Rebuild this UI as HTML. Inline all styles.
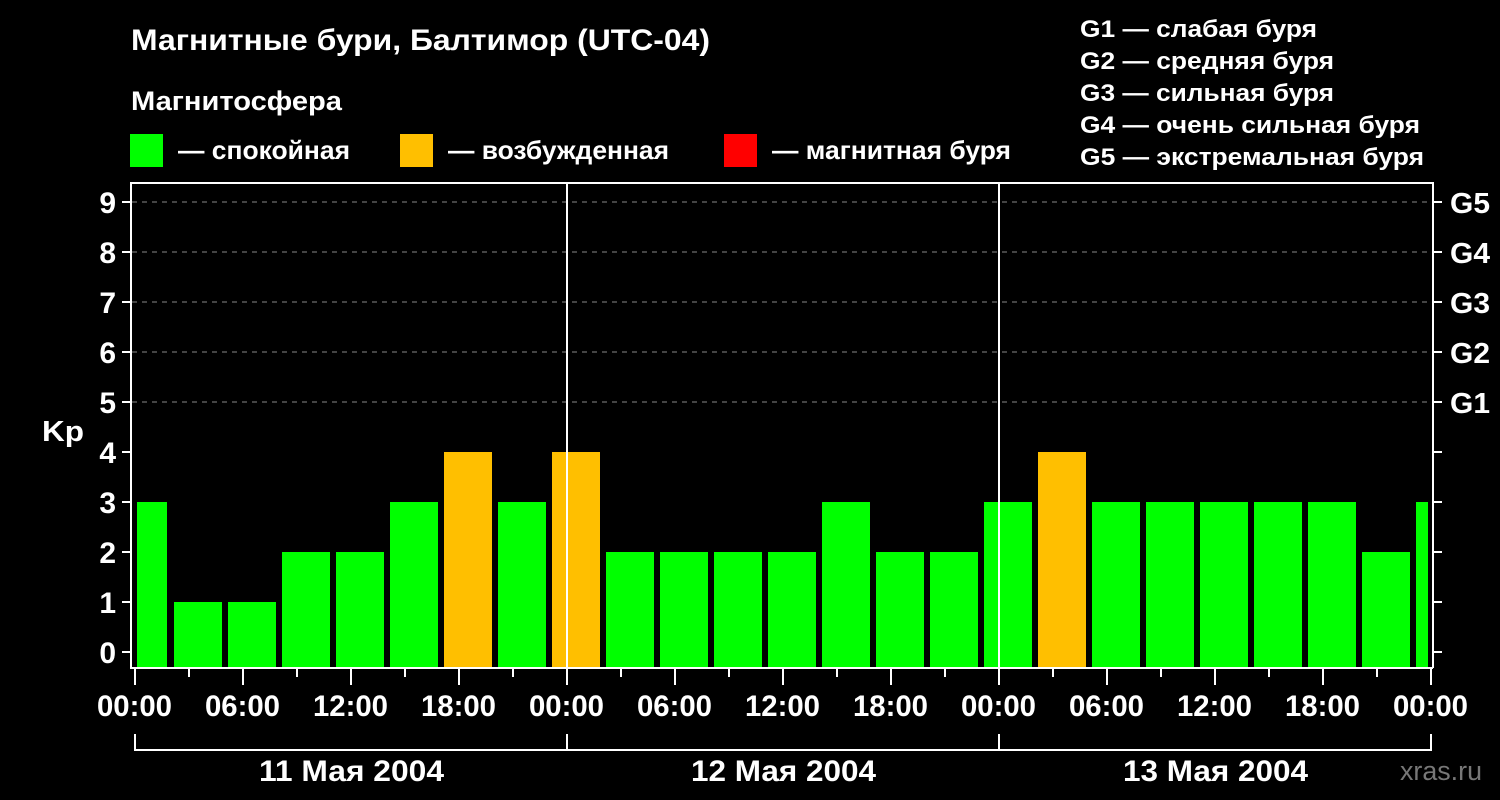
<!DOCTYPE html>
<html><head><meta charset="utf-8"><style>html,body{margin:0;padding:0;background:#000;width:1500px;height:800px;overflow:hidden}</style></head><body>
<svg width="1500" height="800" xmlns="http://www.w3.org/2000/svg" font-family="Liberation Sans, Arial, sans-serif" font-weight="bold" fill="#fff">
<rect width="1500" height="800" fill="#000"/>
<text x="131" y="50" font-size="30" textLength="579" lengthAdjust="spacingAndGlyphs">Магнитные бури, Балтимор (UTC-04)</text>
<text x="131" y="110" font-size="27" textLength="211" lengthAdjust="spacingAndGlyphs">Магнитосфера</text>
<rect x="130" y="134" width="33" height="33" fill="#00ff00"/>
<text x="178" y="159" font-size="26" textLength="172" lengthAdjust="spacingAndGlyphs">— спокойная</text>
<rect x="400" y="134" width="33" height="33" fill="#ffbf00"/>
<text x="448" y="159" font-size="26" textLength="221" lengthAdjust="spacingAndGlyphs">— возбужденная</text>
<rect x="724" y="134" width="33" height="33" fill="#ff0000"/>
<text x="772" y="159" font-size="26" textLength="239" lengthAdjust="spacingAndGlyphs">— магнитная буря</text>
<g font-size="24">
<text x="1080" y="37" textLength="237" lengthAdjust="spacingAndGlyphs">G1 — слабая буря</text>
<text x="1080" y="69" textLength="254" lengthAdjust="spacingAndGlyphs">G2 — средняя буря</text>
<text x="1080" y="101" textLength="254" lengthAdjust="spacingAndGlyphs">G3 — сильная буря</text>
<text x="1080" y="133" textLength="340" lengthAdjust="spacingAndGlyphs">G4 — очень сильная буря</text>
<text x="1080" y="165" textLength="344" lengthAdjust="spacingAndGlyphs">G5 — экстремальная буря</text>
</g>
<g stroke="#888" stroke-width="1" stroke-dasharray="5,5">
<line x1="132" y1="202" x2="1432" y2="202"/><line x1="132" y1="252" x2="1432" y2="252"/><line x1="132" y1="302" x2="1432" y2="302"/><line x1="132" y1="352" x2="1432" y2="352"/><line x1="132" y1="402" x2="1432" y2="402"/>
</g>
<g>
<rect x="137" y="502" width="30" height="166" fill="#00ff00"/>
<rect x="174" y="602" width="48" height="66" fill="#00ff00"/>
<rect x="228" y="602" width="48" height="66" fill="#00ff00"/>
<rect x="282" y="552" width="48" height="116" fill="#00ff00"/>
<rect x="336" y="552" width="48" height="116" fill="#00ff00"/>
<rect x="390" y="502" width="48" height="166" fill="#00ff00"/>
<rect x="444" y="452" width="48" height="216" fill="#ffbf00"/>
<rect x="498" y="502" width="48" height="166" fill="#00ff00"/>
<rect x="552" y="452" width="48" height="216" fill="#ffbf00"/>
<rect x="606" y="552" width="48" height="116" fill="#00ff00"/>
<rect x="660" y="552" width="48" height="116" fill="#00ff00"/>
<rect x="714" y="552" width="48" height="116" fill="#00ff00"/>
<rect x="768" y="552" width="48" height="116" fill="#00ff00"/>
<rect x="822" y="502" width="48" height="166" fill="#00ff00"/>
<rect x="876" y="552" width="48" height="116" fill="#00ff00"/>
<rect x="930" y="552" width="48" height="116" fill="#00ff00"/>
<rect x="984" y="502" width="48" height="166" fill="#00ff00"/>
<rect x="1038" y="452" width="48" height="216" fill="#ffbf00"/>
<rect x="1092" y="502" width="48" height="166" fill="#00ff00"/>
<rect x="1146" y="502" width="48" height="166" fill="#00ff00"/>
<rect x="1200" y="502" width="48" height="166" fill="#00ff00"/>
<rect x="1254" y="502" width="48" height="166" fill="#00ff00"/>
<rect x="1308" y="502" width="48" height="166" fill="#00ff00"/>
<rect x="1362" y="552" width="48" height="116" fill="#00ff00"/>
<rect x="1416" y="502" width="12" height="166" fill="#00ff00"/>
</g>
<g stroke="#fff" stroke-width="2" fill="none">
<polyline points="1433,668 131,668 131,183 1433,183 1433,668"/>
<line x1="567" y1="183" x2="567" y2="668"/>
<line x1="999" y1="183" x2="999" y2="668"/>
<path d="M122 202h9M122 252h9M122 302h9M122 352h9M122 402h9M122 452h9M122 502h9M122 552h9M122 602h9M122 652h9"/>
<path d="M1433 202h9M1433 252h9M1433 302h9M1433 352h9M1433 402h9M1433 452h9M1433 502h9M1433 552h9M1433 602h9M1433 652h9"/>
<path d="M135 668v17M243 668v17M351 668v17M459 668v17M567 668v17M675 668v17M783 668v17M891 668v17M999 668v17M1107 668v17M1215 668v17M1323 668v17M1431 668v17"/>
<path d="M189 668v9M297 668v9M405 668v9M513 668v9M621 668v9M729 668v9M837 668v9M945 668v9M1053 668v9M1161 668v9M1269 668v9M1377 668v9"/>
<path d="M135 734v16H1431v-16M567 734v16M999 734v16"/>
</g>
<g font-size="30" text-anchor="end">
<text x="116" y="213">9</text><text x="116" y="263">8</text><text x="116" y="313">7</text><text x="116" y="363">6</text><text x="116" y="413">5</text><text x="116" y="463">4</text><text x="116" y="513">3</text><text x="116" y="563">2</text><text x="116" y="613">1</text><text x="116" y="663">0</text>
</g>
<text x="42" y="441" font-size="29" textLength="42" lengthAdjust="spacingAndGlyphs">Kp</text>
<g font-size="29">
<text x="1450" y="213" textLength="40" lengthAdjust="spacingAndGlyphs">G5</text><text x="1450" y="263" textLength="40" lengthAdjust="spacingAndGlyphs">G4</text><text x="1450" y="313" textLength="40" lengthAdjust="spacingAndGlyphs">G3</text><text x="1450" y="363" textLength="40" lengthAdjust="spacingAndGlyphs">G2</text><text x="1450" y="413" textLength="40" lengthAdjust="spacingAndGlyphs">G1</text>
</g>
<g font-size="30">
<text x="97" y="716" textLength="75" lengthAdjust="spacingAndGlyphs">00:00</text>
<text x="205" y="716" textLength="75" lengthAdjust="spacingAndGlyphs">06:00</text>
<text x="313" y="716" textLength="75" lengthAdjust="spacingAndGlyphs">12:00</text>
<text x="421" y="716" textLength="75" lengthAdjust="spacingAndGlyphs">18:00</text>
<text x="529" y="716" textLength="75" lengthAdjust="spacingAndGlyphs">00:00</text>
<text x="637" y="716" textLength="75" lengthAdjust="spacingAndGlyphs">06:00</text>
<text x="745" y="716" textLength="75" lengthAdjust="spacingAndGlyphs">12:00</text>
<text x="853" y="716" textLength="75" lengthAdjust="spacingAndGlyphs">18:00</text>
<text x="961" y="716" textLength="75" lengthAdjust="spacingAndGlyphs">00:00</text>
<text x="1069" y="716" textLength="75" lengthAdjust="spacingAndGlyphs">06:00</text>
<text x="1177" y="716" textLength="75" lengthAdjust="spacingAndGlyphs">12:00</text>
<text x="1285" y="716" textLength="75" lengthAdjust="spacingAndGlyphs">18:00</text>
<text x="1393" y="716" textLength="75" lengthAdjust="spacingAndGlyphs">00:00</text>
<text x="259" y="781" textLength="185" lengthAdjust="spacingAndGlyphs">11 Мая 2004</text>
<text x="691" y="781" textLength="185" lengthAdjust="spacingAndGlyphs">12 Мая 2004</text>
<text x="1123" y="781" textLength="185" lengthAdjust="spacingAndGlyphs">13 Мая 2004</text>
</g>
<text x="1400" y="780" font-size="27" fill="#777" font-weight="normal" textLength="82" lengthAdjust="spacingAndGlyphs">xras.ru</text>
</svg>
</body></html>
